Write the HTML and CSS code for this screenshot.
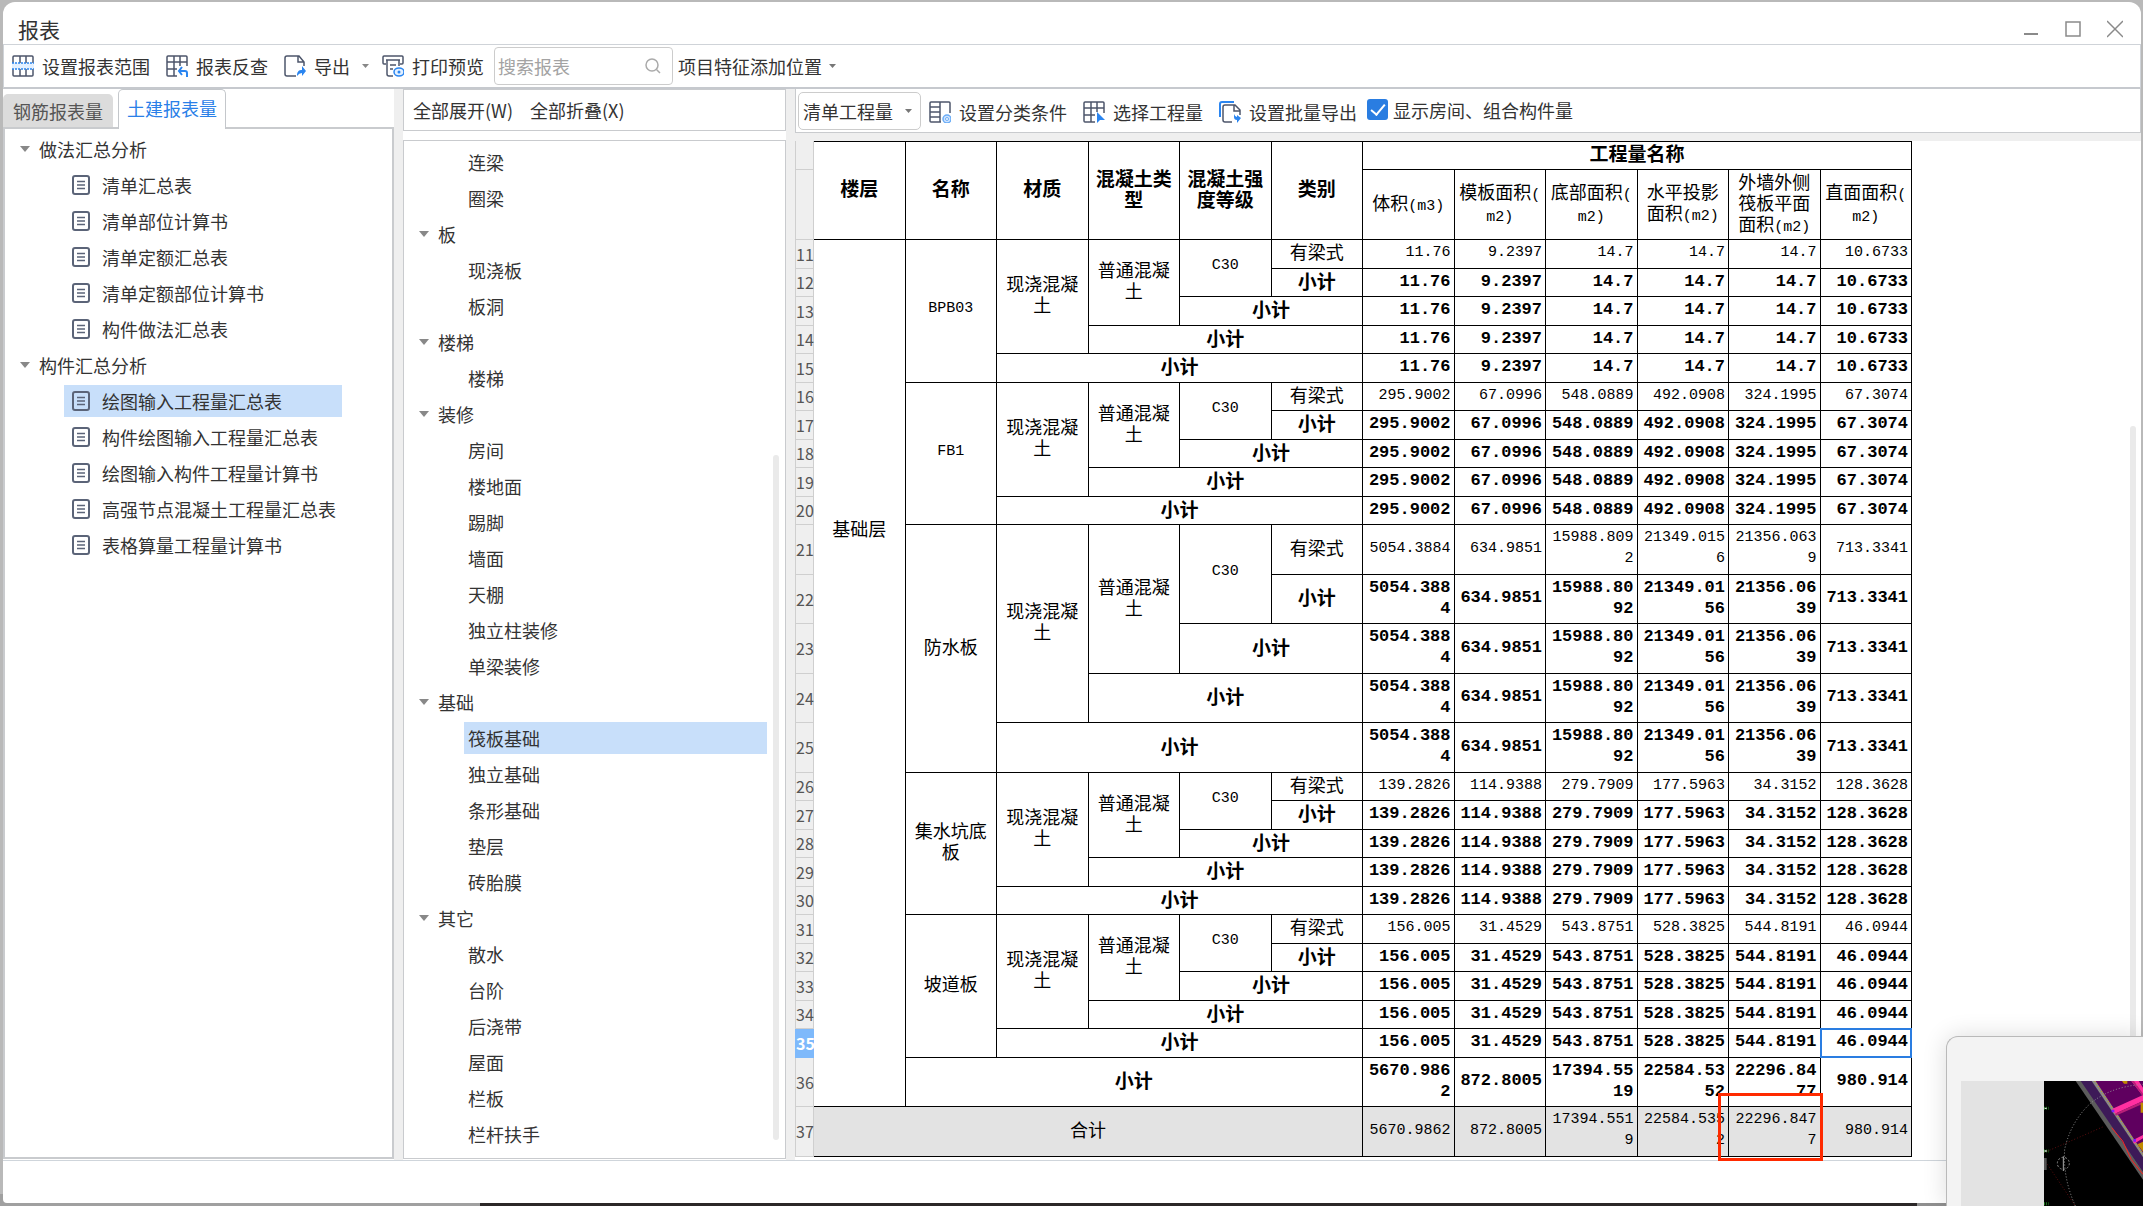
FILE: index.html
```html
<!DOCTYPE html>
<html lang="zh-CN">
<head>
<meta charset="utf-8">
<title>报表</title>
<link rel="stylesheet" href="styles.css">
</head>
<body>
<svg class="sprite" aria-hidden="true">
  <symbol id="doc" viewBox="0 0 18 20"><rect x="1" y="1" width="16" height="18" rx="2" fill="none" stroke="currentColor" stroke-width="2"/><path d="M5 6.5h8M5 10h8M5 13.5h8" stroke="currentColor" stroke-width="1.5"/></symbol>
  <symbol id="down" viewBox="0 0 10 8"><path d="M0 1h10L5 7z" fill="currentColor"/></symbol>
</svg>
<div class="window">
  <header class="titlebar">
    <h1>报表</h1>
    <div class="controls">
      <button aria-label="最小化"><svg width="16" height="18" viewBox="0 0 16 18"><path d="M1 14h14" stroke="#8a8a8a" stroke-width="2"/></svg></button>
      <button aria-label="最大化"><svg width="16" height="18" viewBox="0 0 16 18"><rect x="1" y="2" width="14" height="14" fill="none" stroke="#8a8a8a" stroke-width="1.5"/></svg></button>
      <button aria-label="关闭"><svg width="16" height="18" viewBox="0 0 16 18"><path d="M0 1l16 16M16 1L0 17" stroke="#8a8a8a" stroke-width="1.5"/></svg></button>
    </div>
  </header>

  <div class="toolbar">
    <button class="tool"><svg width="22" height="22" viewBox="0 0 22 22"><path d="M1 8V2q0-1 1-1h18q1 0 1 1v6M1 14v6q0 1 1 1h18q1 0 1-1v-6M8 1v7M14 1v7M8 14v7M14 14v7" fill="none" stroke="#4d566b" stroke-width="1.5"/><path d="M0 8h22v6H0z" fill="#e3f0ff"/><path d="M0 8h22M0 14h22" stroke="#2a85f0" stroke-width="1.5" stroke-dasharray="2 1"/></svg>设置报表范围</button>
    <button class="tool"><svg width="22" height="22" viewBox="0 0 22 22"><path d="M11 21H2q-1 0-1-1V2q0-1 1-1h18q1 0 1 1v9M1 7h20M1 14h10M8 1v20M14 1v10" fill="none" stroke="#4d566b" stroke-width="1.5"/><path d="M16 12l-3 4 3 4M13 16h6q2 0 2 2v4" fill="none" stroke="#2a85f0" stroke-width="2"/></svg>报表反查</button>
    <button class="tool"><svg width="22" height="22" viewBox="0 0 22 22"><path d="M12 21H3q-2 0-2-2V3q0-2 2-2h12l5 6v4M14 1v6h6" fill="none" stroke="#4d566b" stroke-width="1.5"/><path d="M13 21c0-5 2-6 5-6v-4l4 5-4 5v-3q-3 0-5 3z" fill="#2a85f0"/></svg>导出</button>
    <button class="drop" aria-label="导出选项"><svg width="7" height="6"><use href="#down"/></svg></button>
    <button class="tool"><svg width="22" height="22" viewBox="0 0 22 22"><path d="M4 9H2q-1 0-1-1V2q0-1 1-1h18q1 0 1 1v6q0 1-1 1h-2M4 5h14M5 5v14q0 2 2 2h4M17 5v6M8 10h6M8 14h3" fill="none" stroke="#4d566b" stroke-width="1.5"/><ellipse cx="17" cy="17" rx="5" ry="4" fill="#e3f0ff" stroke="#2a85f0" stroke-width="1.5"/><circle cx="17" cy="17" r="1.5" fill="#2a85f0"/></svg>打印预览</button>
    <div class="search">
      <input type="search" placeholder="搜索报表" aria-label="搜索报表">
      <svg width="16" height="16" viewBox="0 0 16 16"><circle cx="7" cy="7" r="6" fill="none" stroke="#aaa" stroke-width="1.5"/><path d="M11.500 11.500L15 15" stroke="#aaa" stroke-width="1.500"/></svg>
    </div>
    <div class="pick plain">
      <select aria-label="项目特征添加位置"><option>项目特征添加位置</option></select>
      <svg width="7" height="6"><use href="#down"/></svg>
    </div>
  </div>

  <main class="panes">
    <section class="left">
      <div class="tabs">
        <button class="tab">钢筋报表量</button>
        <button class="tab active">土建报表量</button>
      </div>
      <nav class="tree reports">
        <ul>
          <li><a class="group" href="#"><svg><use href="#down"/></svg>做法汇总分析</a></li>
          <li><a href="#"><svg><use href="#doc"/></svg>清单汇总表</a></li>
          <li><a href="#"><svg><use href="#doc"/></svg>清单部位计算书</a></li>
          <li><a href="#"><svg><use href="#doc"/></svg>清单定额汇总表</a></li>
          <li><a href="#"><svg><use href="#doc"/></svg>清单定额部位计算书</a></li>
          <li><a href="#"><svg><use href="#doc"/></svg>构件做法汇总表</a></li>
          <li><a class="group" href="#"><svg><use href="#down"/></svg>构件汇总分析</a></li>
          <li><a class="selected" href="#"><svg><use href="#doc"/></svg>绘图输入工程量汇总表</a></li>
          <li><a href="#"><svg><use href="#doc"/></svg>构件绘图输入工程量汇总表</a></li>
          <li><a href="#"><svg><use href="#doc"/></svg>绘图输入构件工程量计算书</a></li>
          <li><a href="#"><svg><use href="#doc"/></svg>高强节点混凝土工程量汇总表</a></li>
          <li><a href="#"><svg><use href="#doc"/></svg>表格算量工程量计算书</a></li>
        </ul>
      </nav>
    </section>

    <section class="middle">
      <div class="expand"><button>全部展开(W)</button><button>全部折叠(X)</button></div>
      <nav class="tree parts">
        <ul>
          <li><a href="#">连梁</a></li>
          <li><a href="#">圈梁</a></li>
          <li><a class="group" href="#"><svg><use href="#down"/></svg>板</a></li>
          <li><a href="#">现浇板</a></li>
          <li><a href="#">板洞</a></li>
          <li><a class="group" href="#"><svg><use href="#down"/></svg>楼梯</a></li>
          <li><a href="#">楼梯</a></li>
          <li><a class="group" href="#"><svg><use href="#down"/></svg>装修</a></li>
          <li><a href="#">房间</a></li>
          <li><a href="#">楼地面</a></li>
          <li><a href="#">踢脚</a></li>
          <li><a href="#">墙面</a></li>
          <li><a href="#">天棚</a></li>
          <li><a href="#">独立柱装修</a></li>
          <li><a href="#">单梁装修</a></li>
          <li><a class="group" href="#"><svg><use href="#down"/></svg>基础</a></li>
          <li><a class="selected" href="#">筏板基础</a></li>
          <li><a href="#">独立基础</a></li>
          <li><a href="#">条形基础</a></li>
          <li><a href="#">垫层</a></li>
          <li><a href="#">砖胎膜</a></li>
          <li><a class="group" href="#"><svg><use href="#down"/></svg>其它</a></li>
          <li><a href="#">散水</a></li>
          <li><a href="#">台阶</a></li>
          <li><a href="#">后浇带</a></li>
          <li><a href="#">屋面</a></li>
          <li><a href="#">栏板</a></li>
          <li><a href="#">栏杆扶手</a></li>
        </ul>
        <span class="scrollbar"></span>
      </nav>
    </section>

    <section class="right">
      <div class="options">
        <div class="pick">
          <select aria-label="工程量类型"><option>清单工程量</option></select>
          <svg width="7" height="6"><use href="#down"/></svg>
        </div>
        <button class="tool"><svg width="22" height="22" viewBox="0 0 22 22"><path d="M12 21H2q-1 0-1-1V2q0-1 1-1h18q1 0 1 1v10M11 1v20M1 6h10M1 11h10M1 16h10" fill="none" stroke="#4d566b" stroke-width="1.5"/><circle cx="18" cy="18" r="4" fill="#cfe4ff" stroke="#6badf7" stroke-width="1.500"/><circle cx="18" cy="18" r="1.500" fill="#fff" stroke="#6badf7"/></svg>设置分类条件</button>
        <button class="tool"><svg width="22" height="22" viewBox="0 0 22 22"><path d="M12 21H2q-1 0-1-1V2q0-1 1-1h18q1 0 1 1v10M1 7h20M1 14h11M8 1v20M14 1v10" fill="none" stroke="#4d566b" stroke-width="1.5"/><path d="M14 11v11l3-3h5z" fill="#2a85f0"/></svg>选择工程量</button>
        <button class="tool"><svg width="22" height="22" viewBox="0 0 22 22"><path d="M1 16V3q0-2 2-2h12" fill="none" stroke="#2a85f0" stroke-width="2"/><path d="M13 21H6q-2 0-2-2V6q0-2 2-2h10l5 5v5M15 4v6h6" fill="none" stroke="#4d566b" stroke-width="1.500"/><path d="M15 13v3q0 3 3 3v3l4-5-4-3v2q-2 0-3-3z" fill="#2a85f0"/></svg>设置批量导出</button>
        <label class="check"><input type="checkbox" checked>显示房间、组合构件量</label>
      </div>
      <div class="sheet">
        <table>
          <colgroup><col class="idx"><col span="12"></colgroup>
          <thead>
            <tr><th class="i"></th><th rowspan="2">楼层</th><th rowspan="2">名称</th><th rowspan="2">材质</th><th rowspan="2">混凝土类型</th><th rowspan="2">混凝土强度等级</th><th rowspan="2">类别</th><th colspan="6">工程量名称</th></tr>
            <tr><th class="i"></th><th>体积<span class="l">(m3)</span></th><th>模板面积<span class="l">(<br>m2)</span></th><th>底部面积<span class="l">(<br>m2)</span></th><th>水平投影面积<span class="l">(m2)</span></th><th>外墙外侧筏板平面面积<span class="l">(m2)</span></th><th>直面面积<span class="l">(<br>m2)</span></th></tr>
          </thead>
          <tbody>
            <tr><th class="i">11</th><td class="t floor" rowspan="26">基础层</td><td class="t l" rowspan="5">BPB03</td><td class="t" rowspan="4">现浇混凝土</td><td class="t" rowspan="3">普通混凝土</td><td class="t l" rowspan="2">C30</td><td class="t">有梁式</td><td>11.76</td><td>9.2397</td><td>14.7</td><td>14.7</td><td>14.7</td><td>10.6733</td></tr>
            <tr class="s"><th class="i">12</th><td class="t">小计</td><td>11.76</td><td>9.2397</td><td>14.7</td><td>14.7</td><td>14.7</td><td>10.6733</td></tr>
            <tr class="s"><th class="i">13</th><td class="t" colspan="2">小计</td><td>11.76</td><td>9.2397</td><td>14.7</td><td>14.7</td><td>14.7</td><td>10.6733</td></tr>
            <tr class="s"><th class="i">14</th><td class="t" colspan="3">小计</td><td>11.76</td><td>9.2397</td><td>14.7</td><td>14.7</td><td>14.7</td><td>10.6733</td></tr>
            <tr class="s"><th class="i">15</th><td class="t" colspan="4">小计</td><td>11.76</td><td>9.2397</td><td>14.7</td><td>14.7</td><td>14.7</td><td>10.6733</td></tr>
            <tr><th class="i">16</th><td class="t l" rowspan="5">FB1</td><td class="t" rowspan="4">现浇混凝土</td><td class="t" rowspan="3">普通混凝土</td><td class="t l" rowspan="2">C30</td><td class="t">有梁式</td><td>295.9002</td><td>67.0996</td><td>548.0889</td><td>492.0908</td><td>324.1995</td><td>67.3074</td></tr>
            <tr class="s"><th class="i">17</th><td class="t">小计</td><td>295.9002</td><td>67.0996</td><td>548.0889</td><td>492.0908</td><td>324.1995</td><td>67.3074</td></tr>
            <tr class="s"><th class="i">18</th><td class="t" colspan="2">小计</td><td>295.9002</td><td>67.0996</td><td>548.0889</td><td>492.0908</td><td>324.1995</td><td>67.3074</td></tr>
            <tr class="s"><th class="i">19</th><td class="t" colspan="3">小计</td><td>295.9002</td><td>67.0996</td><td>548.0889</td><td>492.0908</td><td>324.1995</td><td>67.3074</td></tr>
            <tr class="s"><th class="i">20</th><td class="t" colspan="4">小计</td><td>295.9002</td><td>67.0996</td><td>548.0889</td><td>492.0908</td><td>324.1995</td><td>67.3074</td></tr>
            <tr class="tall"><th class="i">21</th><td class="t" rowspan="5">防水板</td><td class="t" rowspan="4">现浇混凝土</td><td class="t" rowspan="3">普通混凝土</td><td class="t l" rowspan="2">C30</td><td class="t">有梁式</td><td>5054.3884</td><td>634.9851</td><td>15988.8092</td><td>21349.0156</td><td>21356.0639</td><td>713.3341</td></tr>
            <tr class="s tall"><th class="i">22</th><td class="t">小计</td><td>5054.3884</td><td>634.9851</td><td>15988.8092</td><td>21349.0156</td><td>21356.0639</td><td>713.3341</td></tr>
            <tr class="s tall"><th class="i">23</th><td class="t" colspan="2">小计</td><td>5054.3884</td><td>634.9851</td><td>15988.8092</td><td>21349.0156</td><td>21356.0639</td><td>713.3341</td></tr>
            <tr class="s tall"><th class="i">24</th><td class="t" colspan="3">小计</td><td>5054.3884</td><td>634.9851</td><td>15988.8092</td><td>21349.0156</td><td>21356.0639</td><td>713.3341</td></tr>
            <tr class="s tall"><th class="i">25</th><td class="t" colspan="4">小计</td><td>5054.3884</td><td>634.9851</td><td>15988.8092</td><td>21349.0156</td><td>21356.0639</td><td>713.3341</td></tr>
            <tr><th class="i">26</th><td class="t" rowspan="5">集水坑底板</td><td class="t" rowspan="4">现浇混凝土</td><td class="t" rowspan="3">普通混凝土</td><td class="t l" rowspan="2">C30</td><td class="t">有梁式</td><td>139.2826</td><td>114.9388</td><td>279.7909</td><td>177.5963</td><td>34.3152</td><td>128.3628</td></tr>
            <tr class="s"><th class="i">27</th><td class="t">小计</td><td>139.2826</td><td>114.9388</td><td>279.7909</td><td>177.5963</td><td>34.3152</td><td>128.3628</td></tr>
            <tr class="s"><th class="i">28</th><td class="t" colspan="2">小计</td><td>139.2826</td><td>114.9388</td><td>279.7909</td><td>177.5963</td><td>34.3152</td><td>128.3628</td></tr>
            <tr class="s"><th class="i">29</th><td class="t" colspan="3">小计</td><td>139.2826</td><td>114.9388</td><td>279.7909</td><td>177.5963</td><td>34.3152</td><td>128.3628</td></tr>
            <tr class="s"><th class="i">30</th><td class="t" colspan="4">小计</td><td>139.2826</td><td>114.9388</td><td>279.7909</td><td>177.5963</td><td>34.3152</td><td>128.3628</td></tr>
            <tr><th class="i">31</th><td class="t" rowspan="5">坡道板</td><td class="t" rowspan="4">现浇混凝土</td><td class="t" rowspan="3">普通混凝土</td><td class="t l" rowspan="2">C30</td><td class="t">有梁式</td><td>156.005</td><td>31.4529</td><td>543.8751</td><td>528.3825</td><td>544.8191</td><td>46.0944</td></tr>
            <tr class="s"><th class="i">32</th><td class="t">小计</td><td>156.005</td><td>31.4529</td><td>543.8751</td><td>528.3825</td><td>544.8191</td><td>46.0944</td></tr>
            <tr class="s"><th class="i">33</th><td class="t" colspan="2">小计</td><td>156.005</td><td>31.4529</td><td>543.8751</td><td>528.3825</td><td>544.8191</td><td>46.0944</td></tr>
            <tr class="s"><th class="i">34</th><td class="t" colspan="3">小计</td><td>156.005</td><td>31.4529</td><td>543.8751</td><td>528.3825</td><td>544.8191</td><td>46.0944</td></tr>
            <tr class="s"><th class="i current">35</th><td class="t" colspan="4">小计</td><td>156.005</td><td>31.4529</td><td>543.8751</td><td>528.3825</td><td>544.8191</td><td class="cursor">46.0944</td></tr>
            <tr class="s tall"><th class="i">36</th><td class="t" colspan="5">小计</td><td>5670.9862</td><td>872.8005</td><td>17394.5519</td><td>22584.5352</td><td>22296.8477</td><td>980.914</td></tr>
            <tr class="total tall"><th class="i">37</th><td class="t" colspan="6">合计</td><td>5670.9862</td><td>872.8005</td><td>17394.5519</td><td>22584.5352</td><td class="marked">22296.8477</td><td>980.914</td></tr>
          </tbody>
        </table>
        <span class="scrollbar"></span>
      </div>
    </section>
  </main>
  <footer class="statusbar"></footer>
</div>

<aside class="preview">
  <div class="canvas">
    <svg width="99" height="125" viewBox="0 0 297 375" preserveAspectRatio="xMinYMin slice">
      <rect width="297" height="375" fill="#000"/>
      <path d="M150 0H297V222Z" fill="#5f005f"/>
      <path d="M95 0h20L297 270v26z" fill="#5c5c5c"/>
      <path d="M110 0h34L297 228v44z" fill="#3d1a58"/>
      <path d="M143 0h12L297 215v14z" fill="#8a8a8a"/>
      <path d="M152 0L297 220" stroke="#d9a300" stroke-width="3" stroke-dasharray="3 6"/>
      <path d="M204 84l93-42v18l-84 38zM266 178l31-16v10l-27 16zM262 0h22l13 20v26z" fill="#ff2fa0"/>
      <path d="M213 98l84-38v8l-82 36zM262 0h8l27 38v8z" fill="#b81f78"/>
      <path d="M234 0h16v8h-10zM290 65h7v30h-7zM280 190l17-8v30z" fill="#c08a00"/>
      <path d="M203 86h8v8h-8zM268 174h8v8h-8z" fill="#7a1cff"/>
      <path d="M94 375Q56 290 62 205Q78 130 130 76Q190 18 297 10" fill="none" stroke="#9a9a9a" stroke-width="3" stroke-dasharray="3 6"/>
      <path d="M0 215L178 137M0 235L92 372" fill="none" stroke="#8a1414" stroke-width="2" stroke-dasharray="3 6"/>
      <path d="M203 140L236 180L262 236L297 280" fill="none" stroke="#ff2020" stroke-width="3"/>
      <circle cx="58" cy="247" r="18" fill="none" stroke="#888" stroke-width="3" stroke-dasharray="6 5"/>
      <path d="M58 226v44" stroke="#aaa" stroke-width="3"/>
      <path d="M0 231h8v36H0z" fill="#555"/>
      <path d="M0 82h14M0 210h14M0 368h14" stroke="#187018" stroke-width="9" stroke-dasharray="3 3"/>
      <path d="M2 82h6M2 210h6" stroke="#ddd" stroke-width="4"/>
    </svg>
  </div>
</aside>
</body>
</html>
```
FILE: styles.css
```css
* { box-sizing: border-box; }

body {
  margin: 0;
  min-height: 100vh;
  display: flex;
  flex-direction: column;
  padding: 2px 2px 3px 3px;
  background: linear-gradient(90deg, #a0a0a0 480px, #2b2728 480px 1917px, #8f8f8f 1917px) bottom / 100% 12px no-repeat, #b9b9b9;
  color: #333;
  font: 18px/24px "Noto Sans CJK SC", sans-serif;
}

button, input, select {
  font: inherit;
  color: inherit;
  margin: 0;
  padding: 0;
  border: 0;
  background: none;
}

a { color: inherit; text-decoration: none; }
.sprite { display: none; }

.window {
  flex: 1;
  display: flex;
  flex-direction: column;
  background: #fff;
  border-radius: 12px 12px 4px 4px;
  overflow: hidden;
}

.titlebar {
  height: 42px;
  display: flex;
  align-items: center;
  justify-content: space-between;
  padding: 12px 18px 0 15px;
}
.titlebar h1 { margin: 0; font-size: 21px; font-weight: 400; }
.controls { display: flex; gap: 26px; }
.controls button { display: flex; }

.toolbar {
  height: 45px;
  display: flex;
  align-items: center;
  border: 1px solid #cfd3d8;
  border-bottom: 2px solid #c6c9ce;
  padding-left: 8px;
}
.tool {
  display: flex;
  align-items: center;
  gap: 8px;
  margin-right: 16px;
  white-space: nowrap;
}
.drop { display: flex; margin: 0 13px 0 -4px; color: #888; }
.toolbar .drop + .tool { margin-right: 10px; }

.search {
  width: 179px;
  height: 38px;
  display: flex;
  align-items: center;
  border: 1px solid #ccc;
  border-radius: 4px;
  padding: 0 11px 0 3px;
}
.search input { flex: 1; min-width: 0; outline: 0; }
.search input::placeholder { color: #a3a3a3; }

.pick {
  height: 38px;
  width: 123px;
  display: flex;
  align-items: center;
  justify-content: space-between;
  border: 1px solid #ccc;
  border-radius: 5px;
  padding: 0 8px 0 4px;
  margin-right: 8px;
  color: #777;
}
.pick select { appearance: none; color: #333; }
.pick.plain { width: auto; border: 0; gap: 7px; padding-left: 5px; }

.panes {
  flex: 1;
  display: grid;
  grid-template-columns: 391px 383px 1fr;
  gap: 9px;
  background: #efefef;
}
.left, .middle, .right { display: flex; flex-direction: column; min-width: 0; }
.left, .middle { background: #fff; padding-bottom: 1px; }

.tabs { display: flex; align-items: flex-end; gap: 5px; height: 38px; }
.tab {
  height: 33px;
  padding: 0 10px;
  background: #dcdcdc;
  border-radius: 5px 5px 0 0;
  color: #555;
}
.tab.active {
  height: 40px;
  margin-bottom: -2px;
  padding: 0 8px 4px;
  background: #fff;
  border: 1px solid #c4c7cb;
  border-bottom: 0;
  color: #2a80e8;
  z-index: 1;
}

.tree { flex: 1; border: 1px solid #c9cbce; padding-top: 3px; }
.tree ul { list-style: none; margin: 0; padding: 0; }
.tree li { height: 36px; padding: 2px 0; }
.tree a { height: 32px; display: flex; align-items: center; white-space: nowrap; }
.tree .group svg { width: 10px; height: 8px; color: #888; }
.tree .selected { background: #c8dffa; }

.reports { border: 2px solid #c9cbce; padding-top: 2px; }
.reports ul { width: max-content; padding-left: 15px; }
.reports a { margin-left: 44px; padding: 0 6px 0 8px; gap: 12px; }
.reports a svg { width: 18px; height: 20px; color: #5b6478; }
.reports .group { margin-left: 0; padding: 0; gap: 9px; }

.expand {
  height: 42px;
  display: flex;
  align-items: center;
  gap: 17px;
  padding: 0 9px;
  border: 1px solid #c9cbce;
  margin-bottom: 9px;
}
.parts { display: flex; justify-content: space-between; }
.parts ul { width: 303px; margin-left: 60px; }
.parts a { padding-left: 4px; }
.parts .group { margin-left: -45px; padding: 0; gap: 9px; }

.scrollbar { width: 6px; border-radius: 3px; background: #eaeaea; }
.parts .scrollbar { margin: 311px 6px 18px 0; }

.options {
  height: 44px;
  display: flex;
  align-items: center;
  background: #fff;
  border: 1px solid #c9cbce;
  border-top: 0;
  padding-left: 2px;
  margin-bottom: 8px;
}
.options .tool:last-of-type { margin-right: 10px; }
.options .tool { padding-top: 2px; }
.check { display: flex; align-items: center; gap: 5px; padding-bottom: 2px; }
.check input {
  appearance: none;
  width: 21px;
  height: 21px;
  border-radius: 3px;
  background: #2a7de1;
  display: grid;
  place-items: center;
}
.check input::after {
  content: "";
  width: 6px;
  height: 12px;
  border: solid #fff;
  border-width: 0 2px 2px 0;
  transform: rotate(40deg);
  margin-bottom: 3px;
}

.sheet { flex: 1; display: flex; justify-content: space-between; background: #fff; }
.sheet .scrollbar { margin: 285px 5px 0 0; }

table {
  table-layout: fixed;
  width: 1117px;
  height: 0;
  align-self: flex-start;
  border-spacing: 0;
  color: #000;
}
.idx { width: 19px; }
th, td {
  border: solid #000;
  border-width: 0 1px 1px 0;
  padding: 0 3px 3px;
  line-height: 21px;
  word-break: break-all;
}
th { font-size: 18px; padding-bottom: 6px; }
thead tr:first-child { height: 28px; }
thead tr:first-child th { border-top-width: 1px; font-size: 19px; }
thead tr + tr { height: 70px; }
thead tr + tr th { font-weight: 400; padding-bottom: 4px; }

tbody tr { height: 28px; }
tbody tr:nth-child(odd) { height: 29px; }
tbody tr.tall { height: 49px; }
tbody tr.tall:nth-child(odd) { height: 50px; }

td { font: 15px/21px "Liberation Mono", monospace; text-align: right; }
.s td { font-size: 17px; font-weight: 700; }
td.t {
  font-family: "Noto Sans CJK SC", sans-serif;
  font-size: 18px;
  text-align: center;
  padding: 0 8px 5px;
}
.s td.t { font-size: 19px; }
td.t.floor { padding-bottom: 290px; }
.l, td.t.l { font-family: "Liberation Mono", monospace; font-size: 15px; }
span.l { line-height: 15px; }

tr .i, thead tr:first-child .i, thead tr + tr .i {
  padding: 0;
  border: solid #cfcfcf;
  border-width: 0 1px 1px 1px;
  background: #efefef;
  color: #555;
  font-size: 16px;
  font-weight: 400;
  word-break: normal;
}
tr .i.current { background: #7eb9fb; border-color: #7eb9fb; color: #fff; font-weight: 700; }

.total td { background: #e3e3e3; }
.cursor { position: relative; }
.cursor::after { content: ""; position: absolute; inset: -1px; border: 2px solid #2a7de1; }
td.marked { position: relative; }
.marked::after { content: ""; position: absolute; inset: -14px -3px -5px -11px; border: 3px solid #ff2a00; z-index: 1; }

.statusbar { height: 43px; border-top: 1px solid #cfd5db; }

.preview {
  position: fixed;
  right: 0;
  bottom: 0;
  width: 197px;
  height: 170px;
  padding: 44px 0 0 14px;
  background: #f3f3f3;
  border: solid #b9b9b9;
  border-width: 1px 0 0 1px;
  border-top-left-radius: 12px;
  box-shadow: 0 0 24px rgba(0, 0, 0, .14);
}
.canvas { background: #e3e3e3; padding-left: 83px; height: 125px; overflow: hidden; }
.canvas svg { display: block; }
```
